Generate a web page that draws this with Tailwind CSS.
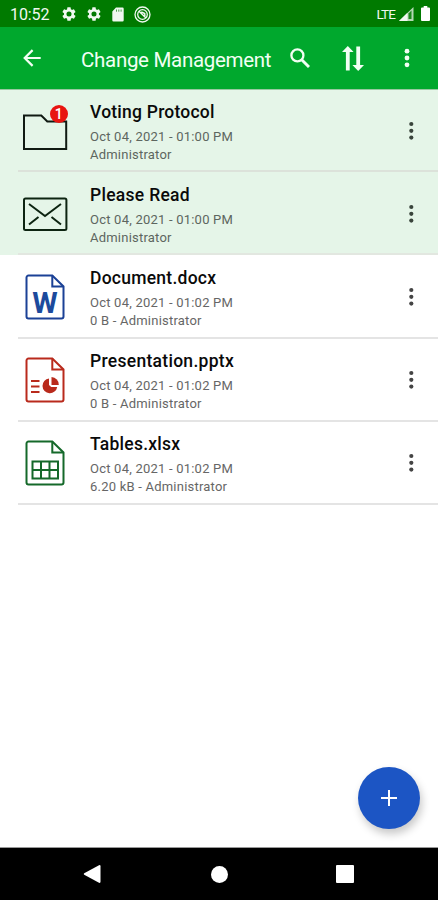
<!DOCTYPE html>
<html lang="en">
<head>
    <meta charset="UTF-8">
    <meta name="viewport" content="width=device-width, initial-scale=1.0">
    <title>Change Management</title>
    <script src="https://cdn.jsdelivr.net/npm/@tailwindcss/browser@4"></script>
</head>
<body class="bg-white font-[Roboto,sans-serif] text-[#0a0a0a]">
    <!-- Shared icons -->
    <svg class="hidden">
        <symbol id="gear" viewBox="0 0 24 24"><path fill="currentColor" d="M19.4 13a7.5 7.5 0 0 0 0-2l2.1-1.65a.5.5 0 0 0 .12-.64l-2-3.46a.5.5 0 0 0-.61-.22l-2.49 1a7.3 7.3 0 0 0-1.69-.98l-.38-2.65A.5.5 0 0 0 14 2h-4a.5.5 0 0 0-.49.42l-.38 2.65c-.61.25-1.17.59-1.69.98l-2.49-1a.5.5 0 0 0-.61.22l-2 3.46a.5.5 0 0 0 .12.64L4.57 11a8 8 0 0 0 0 2l-2.11 1.65a.5.5 0 0 0-.12.64l2 3.46c.12.22.39.3.61.22l2.49-1c.52.4 1.08.73 1.69.98l.38 2.65c.03.24.24.42.49.42h4c.25 0 .46-.18.49-.42l.38-2.65a7.7 7.7 0 0 0 1.69-.98l2.49 1c.23.09.49 0 .61-.22l2-3.46a.5.5 0 0 0-.12-.64zM12 15.8a3.8 3.8 0 1 1 0-7.6 3.8 3.8 0 0 1 0 7.6z"/></symbol>
        <symbol id="dots" viewBox="0 0 6 20"><g fill="currentColor"><circle cx="3.3" cy="3" r="2.1"/><circle cx="3.3" cy="9.8" r="2.1"/><circle cx="3.3" cy="16.6" r="2.1"/></g></symbol>
        <symbol id="page" viewBox="0 0 40 46"><g fill="none" stroke="currentColor" stroke-width="2"><path d="M27.300 1.500H3.500a2 2 0 0 0-2 2v39a2 2 0 0 0 2 2h33a2 2 0 0 0 2-2V12.500z"/><path d="M27.300 1.500V12.500h11"/></g></symbol>
    </svg>

    <div class="relative flex flex-col w-[438px] h-[900px] overflow-hidden">

        <!-- Status bar -->
        <div class="h-[27px] shrink-0 bg-[#007a00] text-[#f0f8f0] flex items-center pl-[10px] pr-[8px]">
            <span class="w-[51px] text-[16px] leading-none tracking-[-0.1px] pt-[2px]">10:52</span>
            <svg class="w-[16px] h-[16px] mt-px"><use href="#gear"/></svg>
            <svg class="w-[16px] h-[16px] mt-px ml-[9px]"><use href="#gear"/></svg>
            <svg class="w-[12px] h-[15px] mt-px ml-[10px]" viewBox="0 0 12 15"><path d="M4 .5h6.500A1.200 1.200 0 0 1 11.700 1.700v11.600a1.200 1.200 0 0 1-1.200 1.200h-9A1.200 1.200 0 0 1 .3 13.300V4.500z" fill="currentColor"/><path d="M4.500 2.500v2.200M6.800 2.500v2.200M9.100 2.500v2.200" stroke="#007a00" stroke-width=".7"/></svg>
            <svg class="w-[17px] h-[17px] mt-px ml-[10px]" viewBox="0 0 17 17" fill="none" stroke="currentColor"><circle cx="8.500" cy="8.500" r="7.500" stroke-width="1.300"/><circle cx="8.500" cy="8.500" r="4.800" stroke-width="1.300"/><path d="M5 5.200l7 6.800M7.300 5.800l3.400 1.700.2 2.500" stroke-width="1.500"/></svg>
            <span class="ml-auto pt-[2px] text-[13.500px] leading-none tracking-[-0.9px]">LTE</span>
            <svg class="w-[15px] h-[14px] ml-[4px] mt-px" viewBox="0 0 15 14"><path d="M14.500 0v14H0z" fill="currentColor" fill-opacity=".75"/><path d="M8.500 5.700V14H0z" fill="currentColor"/><path d="M9.500 6.500l3-3v8.500h-3z" fill="#007a00" fill-opacity=".85"/></svg>
            <svg class="w-[9px] h-[15px] ml-[7px]" viewBox="0 0 9 15" fill="#fff"><path d="M2.700 0h3.600v1.500H8a1 1 0 0 1 1 1V14a1 1 0 0 1-1 1H1a1 1 0 0 1-1-1V2.500a1 1 0 0 1 1-1h1.700z"/></svg>
        </div>

        <!-- App bar -->
        <header class="h-[62px] shrink-0 bg-[#00a82d] text-[#f2fff4] flex items-center pl-[23px] pr-[28px]">
            <svg class="w-[18px] h-[18px]" viewBox="0 0 18 18" fill="none" stroke="currentColor" stroke-width="2.200"><path d="M17.700 9H2M9.600 1.100L1.700 9l7.900 7.900"/></svg>
            <h1 class="ml-[40px] w-[209px] text-[20.500px] leading-[24px] tracking-[-0.300px] pt-[3px] whitespace-nowrap">Change Management</h1>
            <svg class="w-[20px] h-[20px] -mt-px" viewBox="0 0 20 20" fill="none" stroke="currentColor" stroke-width="2.300"><circle cx="7.400" cy="7.400" r="6"/><path d="M11.700 11.700l7.300 7.300" stroke-width="2.900"/></svg>
            <svg class="w-[22px] h-[25px] ml-[32px]" viewBox="0 0 22 25" fill="currentColor"><path d="M5.800 0L11.600 6H7.700v18.500H3.900V6H0zM16.200 25l-5.800-6h3.900V.5h3.800V19H22z"/></svg>
            <svg class="w-[6px] h-[20px] ml-auto" viewBox="0 0 6 20" fill="currentColor"><circle cx="3" cy="3.200" r="2.400"/><circle cx="3" cy="10" r="2.400"/><circle cx="3" cy="16.800" r="2.400"/></svg>
        </header>

        <!-- File list -->
        <main class="grow bg-white border-b border-[#999]">
            <div class="h-[83px] flex bg-[#e5f5e8] border-t border-[#98c9a1]">
                <div class="w-[18px] shrink-0"></div>
                <div class="grow flex border-b-2 border-[#dce2da]">
                    <svg class="w-[48px] h-[46px] ml-[4px] mt-[14px]" viewBox="0 0 48 46"><path d="M2 11.500h17.300l6 6H44.200v27.500H2z" fill="none" stroke="#101a12" stroke-width="2"/><circle cx="37" cy="10" r="9" fill="#e81410"/><text x="36.800" y="15" text-anchor="middle" font-family="Roboto" font-weight="500" font-size="14" fill="#fff">1</text></svg>
                    <div class="ml-[20px] pt-[11px]">
                        <h2 class="text-[17.500px] leading-[22px] font-medium tracking-[0.230px]">Voting Protocol</h2>
                        <p class="mt-[5px] text-[13px] leading-[18px] tracking-[0.220px] text-[#5d665f]">Oct 04, 2021 - 01:00 PM<br>Administrator</p>
                    </div>
                    <svg class="w-[6px] h-[20px] ml-auto mr-[24px] mt-[31px] text-[#39443b]"><use href="#dots"/></svg>
                </div>
            </div>

            <div class="h-[83px] flex bg-[#e5f5e8]">
                <div class="w-[18px] shrink-0"></div>
                <div class="grow flex border-b-2 border-[#e2e7e0]">
                    <svg class="w-[48px] h-[46px] ml-[4px] mt-[19px]" viewBox="0 0 48 46" fill="none" stroke="#0d2411" stroke-width="2"><rect x="2" y="7.500" width="42.400" height="31.500" rx="1.500"/><path d="M7 13l16 12 16-12M7 33.500l9.500-7.500M39 33.500l-9.500-7.500"/></svg>
                    <div class="ml-[20px] pt-[12px]">
                        <h2 class="text-[17.500px] leading-[22px] font-medium tracking-[0.280px]">Please Read</h2>
                        <p class="mt-[5px] text-[13px] leading-[18px] tracking-[0.220px] text-[#5d665f]">Oct 04, 2021 - 01:00 PM<br>Administrator</p>
                    </div>
                    <svg class="w-[6px] h-[20px] ml-auto mr-[24px] mt-[32px] text-[#39443b]"><use href="#dots"/></svg>
                </div>
            </div>

            <div class="h-[84px] ml-[18px] flex border-b-2 border-[#e4e4e4]">
                <div class="relative w-[40px] h-[46px] ml-[7px] mt-[19px] text-[#1b4196]">
                    <svg class="w-[40px] h-[46px]"><use href="#page"/></svg>
                    <span class="absolute left-0 top-[15px] w-full text-center text-[29px] leading-[28px] font-bold text-[#1c4a9c]">W</span>
                </div>
                <div class="ml-[25px] pt-[12px]">
                    <h2 class="text-[17.500px] leading-[22px] font-medium tracking-[0.250px]">Document.docx</h2>
                    <p class="mt-[5px] text-[13px] leading-[18px] tracking-[0.220px] text-[#666]">Oct 04, 2021 - 01:02 PM<br>0 B - Administrator</p>
                </div>
                <svg class="w-[6px] h-[20px] ml-auto mr-[24px] mt-[32px] text-[#444]"><use href="#dots"/></svg>
            </div>

            <div class="h-[83px] ml-[18px] flex border-b-2 border-[#e4e4e4]">
                <div class="relative w-[40px] h-[46px] ml-[7px] mt-[18px] text-[#b92a1c]">
                    <svg class="w-[40px] h-[46px]"><use href="#page"/></svg>
                    <svg class="absolute left-0 top-0 w-[40px] h-[46px]" viewBox="0 0 40 46" fill="currentColor"><path d="M6 24h8.500M6 29.500h8.500M6 35h8.500" stroke="currentColor" stroke-width="1.900"/><path d="M24 21.500v6.500l2.200 2h6A7.400 7.400 0 1 1 24 21.500z"/><path d="M26.500 20a7.600 7.600 0 0 1 7.300 8h-7.300z"/></svg>
                </div>
                <div class="ml-[25px] pt-[11px]">
                    <h2 class="text-[17.500px] leading-[22px] font-medium tracking-[0.290px]">Presentation.pptx</h2>
                    <p class="mt-[5px] text-[13px] leading-[18px] tracking-[0.220px] text-[#666]">Oct 04, 2021 - 01:02 PM<br>0 B - Administrator</p>
                </div>
                <svg class="w-[6px] h-[20px] ml-auto mr-[24px] mt-[31px] text-[#444]"><use href="#dots"/></svg>
            </div>

            <div class="h-[83px] ml-[18px] flex border-b-2 border-[#e4e4e4]">
                <div class="relative w-[40px] h-[46px] ml-[7px] mt-[18px] text-[#15692a]">
                    <svg class="w-[40px] h-[46px]"><use href="#page"/></svg>
                    <svg class="absolute left-0 top-0 w-[40px] h-[46px]" viewBox="0 0 40 46" fill="none" stroke="currentColor" stroke-width="2"><path d="M7.500 21.500h25.500v17H7.500zM7.500 30h25.500M16 21.500v17M24.500 21.500v17"/></svg>
                </div>
                <div class="ml-[25px] pt-[11px]">
                    <h2 class="text-[17.500px] leading-[22px] font-medium tracking-[0.250px]">Tables.xlsx</h2>
                    <p class="mt-[5px] text-[13px] leading-[18px] tracking-[0.220px] text-[#666]">Oct 04, 2021 - 01:02 PM<br>6.20 kB - Administrator</p>
                </div>
                <svg class="w-[6px] h-[20px] ml-auto mr-[24px] mt-[31px] text-[#444]"><use href="#dots"/></svg>
            </div>
        </main>

        <!-- Floating add button -->
        <button class="absolute right-[18px] bottom-[71px] w-[62px] h-[62px] rounded-full bg-[#1c55c4] shadow-[2px_5px_8px_rgba(0,0,0,0.22)] flex items-center justify-center">
            <svg class="w-[16px] h-[16px]" viewBox="0 0 16 16" stroke="#fff" stroke-width="2"><path d="M8 0v16M0 8h16"/></svg>
        </button>

        <!-- Navigation bar -->
        <nav class="h-[52px] shrink-0 bg-black flex items-center justify-between pl-[83px] pr-[84px]">
            <svg class="w-[18px] h-[20px]" viewBox="0 0 18 20" fill="#fff"><path d="M16 1.200q1.500-.6 1.500 1v15.600q0 1.600-1.500 1L1.200 10.800q-1-.8 0-1.600z"/></svg>
            <div class="w-[17px] h-[17px] rounded-full bg-white ml-px"></div>
            <div class="w-[18px] h-[18px] rounded-[1px] bg-white"></div>
        </nav>
    </div>
</body>
</html>
